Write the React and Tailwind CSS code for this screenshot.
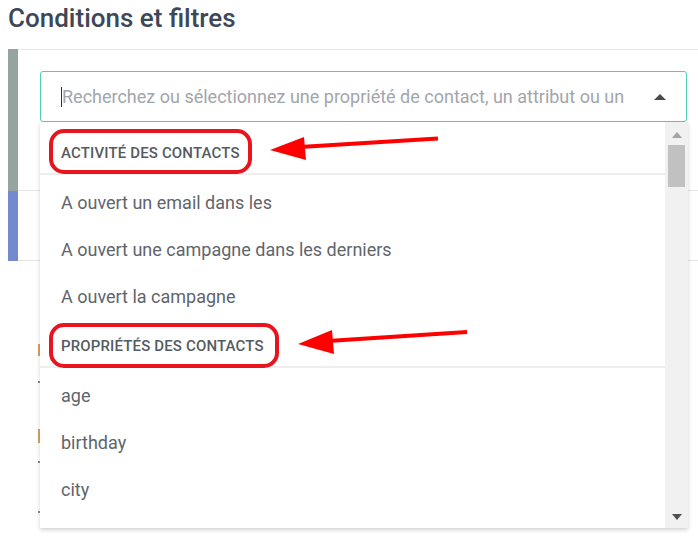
import React from 'react';

const activity = [
  'A ouvert un email dans les',
  'A ouvert une campagne dans les derniers',
  'A ouvert la campagne',
];

const properties = ['age', 'birthday', 'city'];

const GroupHeader = ({ label }) => (
  <div className="flex h-[48px] items-center border-b-2 border-[#eeeeee] pl-[21px] pt-[6px] text-[15px] font-medium uppercase tracking-[0.15px] text-[#555b61]">
    {label}
  </div>
);

const Option = ({ label }) => (
  <div className="flex h-[47px] items-center pl-[21px] text-[18px] text-[#5f656c]">{label}</div>
);

const App = () => {
  return (
    <div className="relative h-[542px] w-[698px] overflow-hidden bg-white font-['Roboto','Liberation_Sans',sans-serif]">
      {/* Title */}
      <h1 className="ml-2 mt-[2px] text-[26px] leading-8 font-medium text-[#3d4756]">
        Conditions et filtres
      </h1>

      {/* Panel behind the dropdown */}
      <div className="ml-2 mt-[15px] flex">
        <div className="flex w-[10px] flex-col">
          <div className="h-[142px] bg-[#95a3a1]" />
          <div className="h-[70px] bg-[#7389d0]" />
        </div>
        <div className="flex-1 border-t border-[#e8e8e8]">
          <div className="h-[141px] border-b border-[#e6e6e6] pl-[22px] pr-[11px] pt-[21px]">
            <div className="flex h-[51px] items-center rounded-[3px] border border-[#4fcfb2] pl-[20px] pr-[20px]">
              <span className="h-[20px] w-px bg-[#333]" />
              <span className="flex-1 truncate text-[18px] text-[#a2a6ab]">
                Recherchez ou sélectionnez une propriété de contact, un attribut ou un
              </span>
              <svg width="12" height="6" viewBox="0 0 12 6" className="ml-2">
                <polygon points="6,0 12,6 0,6" fill="#4a4a4a" />
              </svg>
            </div>
          </div>
          <div className="h-[70px] border-b border-[#e6e6e6]" />
          <div className="ml-[20px] mt-[83px] h-[12px] w-[2px] bg-[#d9a066]" />
          <div className="ml-[20px] mt-[25px] h-[2px] w-[2px] bg-[#888]" />
          <div className="ml-[20px] mt-[46px] h-[14px] w-[2px] bg-[#d9a066]" />
          <div className="ml-[20px] mt-[18px] h-[2px] w-[2px] bg-[#888]" />
          <div className="ml-[20px] mt-[48px] h-[2px] w-[2px] bg-[#888]" />
        </div>
      </div>

      {/* Dropdown menu */}
      <div className="absolute left-[40px] top-[122px] flex h-[406px] w-[648px] bg-white shadow-[0_2px_4px_rgba(0,0,0,0.18)]">
        <div className="flex-1 overflow-hidden pt-[5px]">
          <GroupHeader label="Activité des contacts" />
          <div className="pt-[4px]">
            {activity.map((item) => (
              <Option key={item} label={item} />
            ))}
          </div>
          <GroupHeader label="Propriétés des contacts" />
          <div className="pt-[4px]">
            {properties.map((item) => (
              <Option key={item} label={item} />
            ))}
          </div>
        </div>
        {/* Scrollbar */}
        <div className="flex w-[23px] flex-col items-center bg-[#f1f1f1]">
          <svg width="10" height="6" viewBox="0 0 10 6" className="mt-[10px]">
            <polygon points="5,0 10,6 0,6" fill="#a3a3a3" />
          </svg>
          <div className="mt-[7px] h-[42px] w-[17px] bg-[#c1c1c1]" />
          <div className="flex-1" />
          <svg width="10" height="6" viewBox="0 0 10 6" className="mb-[8px]">
            <polygon points="0,0 10,0 5,6" fill="#505050" />
          </svg>
        </div>
      </div>

      {/* Red annotations */}
      <svg className="pointer-events-none absolute left-0 top-0" width="698" height="542" viewBox="0 0 698 542">
        <rect x="51" y="131" width="199" height="41" rx="13" fill="none" stroke="#e8141e" strokeWidth="4" />
        <line x1="300" y1="147" x2="438" y2="138.5" stroke="#ff0000" strokeWidth="4" />
        <polygon points="270,150 304,137 306,160" fill="#ff0000" />

        <rect x="51" y="325" width="226" height="41" rx="13" fill="none" stroke="#e8141e" strokeWidth="4" />
        <line x1="328" y1="341" x2="467" y2="332" stroke="#ff0000" strokeWidth="4" />
        <polygon points="298,344 332,330 334,354" fill="#ff0000" />
      </svg>
    </div>
  );
};

export default App;
